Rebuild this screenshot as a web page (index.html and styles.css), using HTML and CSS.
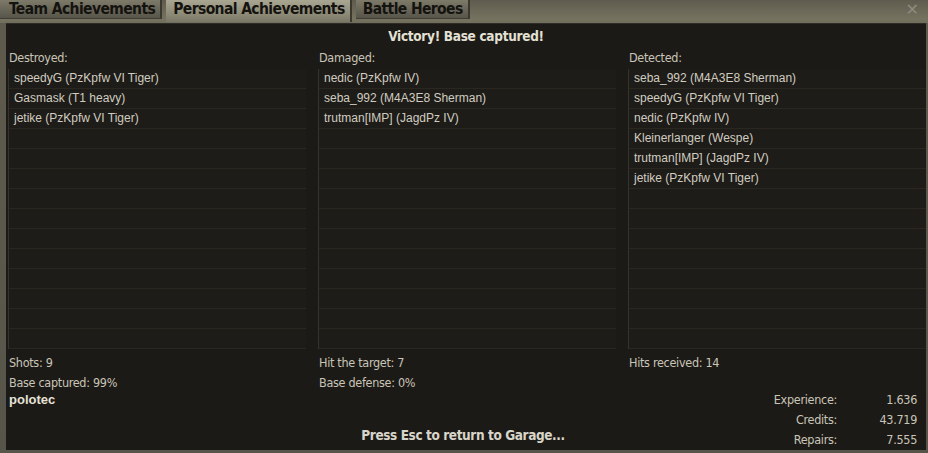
FILE: index.html
```html
<!DOCTYPE html>
<html lang="en">
<head>
  <meta charset="UTF-8" />
  <title>Battle Results</title>
  <link rel="stylesheet" href="styles.css">
</head>
<body>
  <div class="window">
    <header class="tabs">
      <a class="tab">Team Achievements</a>
      <a class="tab active">Personal Achievements</a>
      <a class="tab">Battle Heroes</a>
      <span class="close">&#x2715;</span>
    </header>

    <main class="panel">
      <h1 class="result">Victory! Base captured!</h1>

      <section class="columns">
        <div class="col">
          <div class="label">Destroyed:</div>
          <ul class="list">
            <li>speedyG (PzKpfw VI Tiger)</li>
            <li>Gasmask (T1 heavy)</li>
            <li>jetike (PzKpfw VI Tiger)</li>
            <li></li><li></li><li></li><li></li><li></li><li></li><li></li><li></li><li></li><li></li><li></li>
          </ul>
          <div class="stat">Shots: 9</div>
          <div class="stat">Base captured: 99%</div>
        </div>

        <div class="col">
          <div class="label">Damaged:</div>
          <ul class="list">
            <li>nedic (PzKpfw IV)</li>
            <li>seba_992 (M4A3E8 Sherman)</li>
            <li>trutman[IMP] (JagdPz IV)</li>
            <li></li><li></li><li></li><li></li><li></li><li></li><li></li><li></li><li></li><li></li><li></li>
          </ul>
          <div class="stat">Hit the target: 7</div>
          <div class="stat">Base defense: 0%</div>
        </div>

        <div class="col">
          <div class="label">Detected:</div>
          <ul class="list">
            <li>seba_992 (M4A3E8 Sherman)</li>
            <li>speedyG (PzKpfw VI Tiger)</li>
            <li>nedic (PzKpfw IV)</li>
            <li>Kleinerlanger (Wespe)</li>
            <li>trutman[IMP] (JagdPz IV)</li>
            <li>jetike (PzKpfw VI Tiger)</li>
            <li></li><li></li><li></li><li></li><li></li><li></li><li></li><li></li>
          </ul>
          <div class="stat">Hits received: 14</div>
        </div>
      </section>

      <footer class="bottom">
        <div class="player">polotec</div>
        <div class="hint">Press Esc to return to Garage...</div>
        <dl class="rewards">
          <dt>Experience:</dt><dd>1.636</dd>
          <dt>Credits:</dt><dd>43.719</dd>
          <dt>Repairs:</dt><dd>7.555</dd>
        </dl>
      </footer>
    </main>
  </div>
</body>
</html>
```

FILE: styles.css
```css
* { margin: 0; padding: 0; box-sizing: border-box; }
body {
  width: 928px;
  height: 453px;
  overflow: hidden;
  background: #4a473c;
  font-family: "Liberation Sans Narrow", "DejaVu Sans Condensed", "Liberation Sans", sans-serif;
  color: #c9c5b8;
}
.window {
  height: 453px;
  display: flex;
  flex-direction: column;
  background: linear-gradient(to bottom, #6a6758 0, #5e5b4d 22px, #57544a 100%);
}
.tabs {
  height: 27px;
  display: flex;
  align-items: flex-start;
  gap: 4px;
  position: relative;
  background: linear-gradient(to bottom, #5f5c4f 0, #75725f 19px, #6c6a5a 27px);
}
.tab {
  height: 19px;
  line-height: 18px;
  padding: 0 5px 0 7px;
  font-weight: bold;
  font-size: 15.5px;
  letter-spacing: -0.6px;
  color: #14130f;
  background: linear-gradient(to bottom, #7d7a69, #57554a);
  border-right: 2px solid #3a382f;
  border-bottom: 1px solid #3f3d34;
}
.tab:first-child { padding-left: 9px; }
.tab.active {
  height: 22px;
  background: linear-gradient(to bottom, #a9a692, #8a8774 70%, #7a7767);
  border-bottom: none;
}
.close {
  position: absolute;
  right: 9px;
  top: 0;
  font-family: "DejaVu Sans", sans-serif;
  font-weight: bold;
  font-size: 16px;
  color: #8d8b7f;
}
.panel {
  margin: 0 2px 3px 6px;
  flex: 1;
  display: flex;
  flex-direction: column;
  padding-top: 3px;
  background: #1c1a16;
  border-top: 1px solid #2e2c26;
}
.result {
  height: 21px;
  line-height: 19px;
  text-align: center;
  font-size: 13.5px;
  letter-spacing: -0.3px;
  font-weight: bold;
  color: #e3e0d4;
}
.columns {
  display: grid;
  grid-template-columns: repeat(3, 298px);
  gap: 12px;
  padding-left: 2px;
}
.label {
  height: 21px;
  line-height: 19px;
  padding-left: 1px;
  font-size: 12.5px;
  letter-spacing: -0.3px;
}
.list {
  list-style: none;
  border-left: 1px solid #35332c;
  background: #181612;
}
.list li {
  height: 20px;
  line-height: 19px;
  padding-left: 5px;
  font-family: "Liberation Sans", Arial, sans-serif;
  font-size: 12px;
  color: #d0ccc0;
  background: #1e1c18;
  border-bottom: 1px solid #29271f;
}
.stat {
  height: 20px;
  line-height: 20px;
  padding-left: 1px;
  font-size: 12.5px;
  letter-spacing: -0.3px;
}
.list + .stat { margin-top: 4px; }
.bottom {
  flex: 1;
  display: grid;
  grid-template-columns: 1fr auto 1fr;
  padding: 0 9px 0 3px;
}
.player {
  font-family: "Liberation Sans", Arial, sans-serif;
  font-weight: bold;
  font-size: 13px;
  color: #e6e3d8;
  line-height: 16px;
  margin-top: -1px;
}
.hint {
  align-self: end;
  padding-bottom: 7px;
  font-size: 13.5px;
  letter-spacing: -0.4px;
  font-weight: bold;
  color: #d8d5ca;
}
.rewards {
  justify-self: end;
  display: grid;
  grid-template-columns: auto 80px;
  margin-top: -3px;
  font-size: 12.5px;
  letter-spacing: -0.3px;
  line-height: 20px;
}
.rewards dt { text-align: right; }
.rewards dd { text-align: right; }
```
